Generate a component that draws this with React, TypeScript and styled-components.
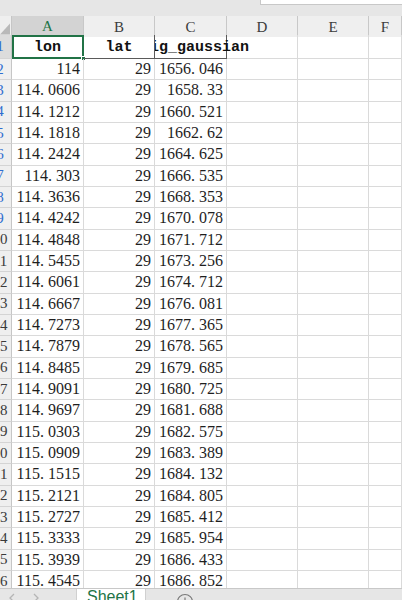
import React from "react";
import styled, { createGlobalStyle } from "styled-components";

const Global = createGlobalStyle`
  * { box-sizing: border-box; }
  html, body { margin: 0; padding: 0; background: #ffffff; }
  body { width: 402px; height: 600px; overflow: hidden; }
`;

const COLS = "12px 72px 71px 72px 71px 71px 1fr";
const GRID = "#dadada";
const GREEN = "#217346";

const Window = styled.div`
  width: 402px;
  height: 600px;
  display: flex;
  flex-direction: column;
  overflow: hidden;
  background: #fff;
`;

const FormulaStrip = styled.div`
  height: 16px;
  flex-shrink: 0;
  background: #e6e6e6;
  display: flex;
  justify-content: flex-end;
  align-items: flex-start;
`;

const NameBox = styled.div`
  width: 142px;
  height: 5px;
  background: #ffffff;
  border-left: 1px solid #c8c8c8;
  border-bottom: 1px solid #c8c8c8;
`;

const Sheet = styled.div`
  flex: 1;
  overflow: hidden;
  display: flex;
  flex-direction: column;
`;

const HeaderRow = styled.div`
  display: grid;
  grid-template-columns: ${COLS};
  height: 19px;
  flex-shrink: 0;
  background: #efefef;
  border-bottom: 1px solid #c2c2c2;
`;

const Corner = styled.div`
  background: #efefef;
  border-right: 1px solid #c6c6c6;
  display: flex;
  align-items: flex-end;
  justify-content: flex-end;
  padding: 0 1px 2px 0;
`;

const ColHead = styled.div<{ $active?: boolean }>`
  display: flex;
  align-items: center;
  justify-content: center;
  font-family: "Liberation Serif", serif;
  font-size: 15px;
  padding-top: 2px;
  color: ${(p) => (p.$active ? GREEN : "#3c3c3c")};
  background: ${(p) => (p.$active ? "#d3d3d3" : "#efefef")};
  border-right: 1px solid #c8c8c8;
  border-bottom: ${(p) => (p.$active ? `2px solid ${GREEN}` : "none")};
`;

const Row = styled.div<{ $h: number }>`
  display: grid;
  grid-template-columns: ${COLS};
  height: ${(p) => p.$h}px;
  flex-shrink: 0;
`;

const RowHead = styled.div<{ $active?: boolean; $short?: boolean }>`
  display: flex;
  justify-content: flex-end;
  align-items: center;
  overflow: hidden;
  background: ${(p) => (p.$active ? "#dcdcdc" : "#efefef")};
  border-right: 1px solid #c6c6c6;
  border-bottom: 1px solid #d4d4d4;
  font-family: "Liberation Serif", serif;
  font-size: 15px;
  color: ${(p) => (p.$short ? "#2f6ed0" : "#3a3a3a")};
`;

const RowNum = styled.span`
  flex-shrink: 0;
  width: 22px;
  text-align: center;
`;

const Cell = styled.div<{ $align?: "left" | "right" | "center" }>`
  position: relative;
  display: flex;
  align-items: center;
  justify-content: ${(p) =>
    p.$align === "left" ? "flex-start" : p.$align === "center" ? "center" : "flex-end"};
  padding: 0 3px 0 4px;
  border-right: 1px solid ${GRID};
  border-bottom: 1px solid ${GRID};
  font-family: "Liberation Serif", serif;
  font-size: 16px;
  color: #1e1e1e;
  white-space: nowrap;
`;

const HeadCell = styled(Cell)<{ $selected?: boolean; $spill?: boolean }>`
  justify-content: center;
  padding: 0;
  padding-top: 2px;
  font-family: "Liberation Mono", monospace;
  font-weight: bold;
  font-size: 15px;
  color: #111;
  border-right: 1px solid #5a5a5a;
  border-bottom: 1px solid #5a5a5a;
  clip-path: ${(p) => (p.$spill ? "inset(0 -200px 0 0)" : "none")};
  z-index: ${(p) => (p.$spill ? 1 : 0)};
  outline: ${(p) => (p.$selected ? `2px solid ${GREEN}` : "none")};
  outline-offset: -2px;
`;

const EmptyHead = styled(Cell)`
  border-bottom: 1px solid ${GRID};
`;

const FillHandle = styled.span`
  position: absolute;
  right: -3px;
  bottom: -3px;
  width: 5px;
  height: 5px;
  background: ${GREEN};
  border: 1px solid #fff;
  z-index: 3;
`;

const Dot = styled.span`
  margin-right: 4px;
`;

const TabBar = styled.div`
  height: 12px;
  flex-shrink: 0;
  background: #e6e6e6;
  border-top: 1px solid #c8c8c8;
  display: flex;
  align-items: flex-start;
  overflow: hidden;
`;

const Nav = styled.div`
  width: 76px;
  display: flex;
  gap: 16px;
  padding: 4px 0 0 8px;
`;

const Tab = styled.div`
  width: 70px;
  height: 14px;
  margin-top: -1px;
  background: #ffffff;
  color: ${GREEN};
  font-family: "Liberation Sans", Arial, sans-serif;
  font-size: 16px;
  line-height: 18px;
  padding-left: 10px;
  border-left: 1px solid #d0d0d0;
  border-right: 1px solid #d0d0d0;
`;

const AddSheet = styled.div`
  margin-left: 30px;
  padding-top: 4px;
  display: flex;
`;

const Num: React.FC<{ v: string }> = ({ v }) => {
  const [a, b] = v.split(".");
  if (b === undefined) return <>{a}</>;
  return (
    <>
      {a}
      <Dot>.</Dot>
      {b}
    </>
  );
};

const data: [string, string, string][] = [
  ["114", "29", "1656.046"],
  ["114.0606", "29", "1658.33"],
  ["114.1212", "29", "1660.521"],
  ["114.1818", "29", "1662.62"],
  ["114.2424", "29", "1664.625"],
  ["114.303", "29", "1666.535"],
  ["114.3636", "29", "1668.353"],
  ["114.4242", "29", "1670.078"],
  ["114.4848", "29", "1671.712"],
  ["114.5455", "29", "1673.256"],
  ["114.6061", "29", "1674.712"],
  ["114.6667", "29", "1676.081"],
  ["114.7273", "29", "1677.365"],
  ["114.7879", "29", "1678.565"],
  ["114.8485", "29", "1679.685"],
  ["114.9091", "29", "1680.725"],
  ["114.9697", "29", "1681.688"],
  ["115.0303", "29", "1682.575"],
  ["115.0909", "29", "1683.389"],
  ["115.1515", "29", "1684.132"],
  ["115.2121", "29", "1684.805"],
  ["115.2727", "29", "1685.412"],
  ["115.3333", "29", "1685.954"],
  ["115.3939", "29", "1686.433"],
  ["115.4545", "29", "1686.852"],
];

const letters = ["A", "B", "C", "D", "E", "F"];

export default function App() {
  return (
    <>
      <Global />
      <Window>
        <FormulaStrip>
          <NameBox />
        </FormulaStrip>
        <Sheet>
          <HeaderRow>
            <Corner>
              <svg width="11" height="12" viewBox="0 0 11 12">
                <polygon points="11,0 11,12 0,12" fill="#b9b9b9" />
              </svg>
            </Corner>
            {letters.map((l) => (
              <ColHead key={l} $active={l === "A"}>
                {l}
              </ColHead>
            ))}
          </HeaderRow>
          <Row $h={24}>
            <RowHead $active $short>
              <RowNum>1</RowNum>
            </RowHead>
            <HeadCell $selected>
              lon
              <FillHandle />
            </HeadCell>
            <HeadCell>lat</HeadCell>
            <HeadCell $spill>orig_gaussian</HeadCell>
            <EmptyHead />
            <EmptyHead />
            <EmptyHead />
          </Row>
          {data.map((r, i) => {
            const n = i + 2;
            return (
              <Row key={n} $h={n % 3 === 1 ? 21.34 : 21.33}>
                <RowHead $short={n < 10}>
                  <RowNum>{n}</RowNum>
                </RowHead>
                <Cell>
                  <Num v={r[0]} />
                </Cell>
                <Cell>{r[1]}</Cell>
                <Cell>
                  <Num v={r[2]} />
                </Cell>
                <Cell />
                <Cell />
                <Cell />
              </Row>
            );
          })}
        </Sheet>
        <TabBar>
          <Nav>
            <svg width="8" height="10" viewBox="0 0 8 10">
              <polyline points="6,1 2,5 6,9" fill="none" stroke="#b5b5b5" strokeWidth="1.3" />
            </svg>
            <svg width="8" height="10" viewBox="0 0 8 10">
              <polyline points="2,1 6,5 2,9" fill="none" stroke="#b5b5b5" strokeWidth="1.3" />
            </svg>
          </Nav>
          <Tab>Sheet1</Tab>
          <AddSheet>
            <svg width="18" height="18" viewBox="0 0 18 18">
              <circle cx="9" cy="9" r="7.5" fill="none" stroke="#7a7a7a" strokeWidth="1.2" />
              <line x1="9" y1="4.5" x2="9" y2="13.5" stroke="#7a7a7a" strokeWidth="1.2" />
              <line x1="4.5" y1="9" x2="13.5" y2="9" stroke="#7a7a7a" strokeWidth="1.2" />
            </svg>
          </AddSheet>
        </TabBar>
      </Window>
    </>
  );
}
